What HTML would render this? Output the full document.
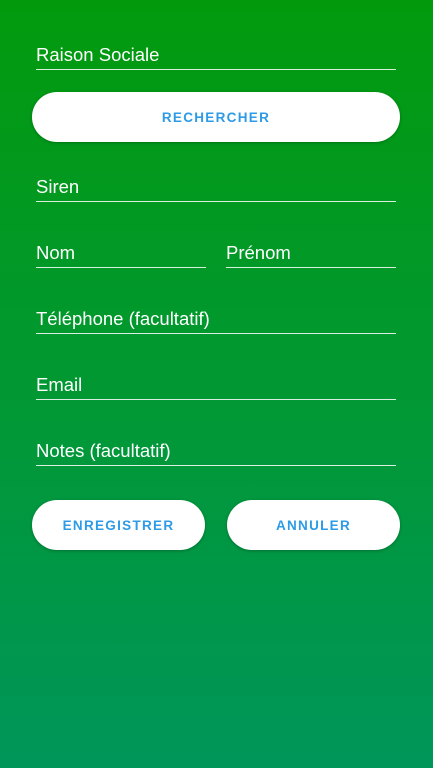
<!DOCTYPE html>
<html><head><meta charset="utf-8"><style>
body{margin:0;width:433px;height:768px;overflow:hidden;background:linear-gradient(#029a0c,#00965a);font-family:"Liberation Sans",sans-serif;position:relative}
.f{position:absolute;color:#fff;font-size:18.5px;border-bottom:1.5px solid rgba(255,255,255,.85);height:24px;line-height:20px}
.b{position:absolute;background:#fff;border-radius:25px;height:50px;line-height:52px;text-align:center;color:#2d9be6;font-size:13.5px;font-weight:bold;letter-spacing:1.3px;box-shadow:0 1px 3px rgba(0,0,0,.25)}
</style></head><body>
<div class="f" style="left:36px;width:360px;top:45px">Raison Sociale</div>
<div class="b" style="left:32px;width:368px;top:92px">RECHERCHER</div>
<div class="f" style="left:36px;width:360px;top:177px">Siren</div>
<div class="f" style="left:36px;width:170px;top:243px">Nom</div>
<div class="f" style="left:226px;width:170px;top:243px">Prénom</div>
<div class="f" style="left:36px;width:360px;top:309px">Téléphone (facultatif)</div>
<div class="f" style="left:36px;width:360px;top:375px">Email</div>
<div class="f" style="left:36px;width:360px;top:441px">Notes (facultatif)</div>
<div class="b" style="left:32px;width:173px;top:500px">ENREGISTRER</div>
<div class="b" style="left:227px;width:173px;top:500px">ANNULER</div>
</body></html>
